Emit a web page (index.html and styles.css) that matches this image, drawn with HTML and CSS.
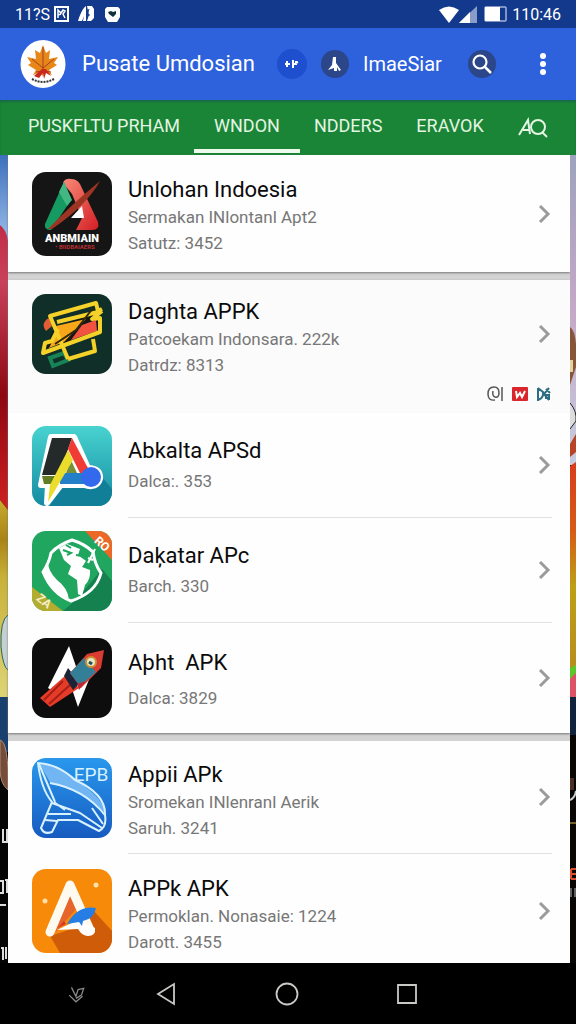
FILE: index.html
```html
<!DOCTYPE html>
<html lang="id">
<head>
    <meta charset="UTF-8">
    <meta name="viewport" content="width=device-width, initial-scale=1">
    <title>Pusate Umdosian</title>
    <link rel="stylesheet" href="styles.css">
</head>
<body>
<div class="status">
    <span>11?S</span>
    <svg class="s-first" width="15" height="16" viewBox="0 0 15 16"><path d="M1 1h13v14H1z" fill="none" stroke="#fff" stroke-width="2"/><path d="M4 12V4l3 3 2-3 2 1-2 3 2 4M4 9l3-1" fill="none" stroke="#fff" stroke-width="1.5"/></svg>
    <svg width="17" height="16" viewBox="0 0 17 16"><path d="M0 15C2 9 4 3 8 0v15H5l1-5-2 5z" fill="#fff"/><path d="M9 0h5l2 3v9l-3 3H9l2-6z" fill="#fff"/><path d="M11 3l-2 6h3" stroke="#12398c" fill="none"/></svg>
    <svg width="17" height="17" viewBox="0 0 17 17"><path d="M3 1h11l2 2v8l-3 5H4l-3-5V3z" fill="#fff"/><path d="M4 6l3-1 2 1 3-1v3l-3 3-4-3z" fill="#12303f"/></svg>
    <div class="status-right">
        <svg width="20" height="17" viewBox="0 0 20 17"><path d="M0 4Q10-3 20 4L10 17z" fill="#fff"/></svg>
        <svg width="18" height="17" viewBox="0 0 18 17"><path d="M0 17L18 0v17z" fill="#8a9cc8"/><path d="M0 17L11 6v11z" fill="#fff"/></svg>
        <svg class="battery" width="23" height="16" viewBox="0 0 23 16"><rect x="1" y="1" width="21" height="14" rx="1" fill="none" stroke="#a5b4da" stroke-width="1.5"/><path d="M1 1h15v14H1z" fill="#fff"/></svg>
        <span>110:46</span>
    </div>
</div>
<header class="header">
    <svg class="logo" width="46" height="48" viewBox="0 0 46 48">
        <ellipse cx="23" cy="24" rx="22.500" ry="24" fill="#fff"/>
        <path d="M23 5l3 8 4-3-1 9 9-2-4 6 3 2-8 5 3 5-8-3-1 5-2-5-8 3 3-5-8-5 3-2-4-6 9 2-1-9 5 3z" fill="#e78719"/>
        <path d="M23 7v24M23 28L12 19M23 28l11-9M23 31l-7 1M23 31l8 1" stroke="#a8401c" fill="none"/>
        <path d="M22 29l-8 7 5 2 4-5 1 6 2-6 5 3-5-7z" fill="#c8281e"/>
        <path d="M12 39q11 6 22 0" fill="none" stroke="#333" stroke-width="2" stroke-dasharray="2 1"/>
    </svg>
    <h1 class="brand">Pusate Umdosian</h1>
    <button class="round blue" aria-label="Tambah"><svg width="14" height="12" viewBox="0 0 14 12"><path d="M2 3v6M0 6h5M8 2v8M8 6l5-2M11 3v4" stroke="#fff" stroke-width="2" fill="none"/></svg></button>
    <button class="round" aria-label="Profil"><svg width="16" height="16" viewBox="0 0 16 16"><path d="M6 1h3v6l5 7-2 1-2-4v4H7v-3l-6 2 4-5z" fill="#fff"/></svg></button>
    <a class="sub-brand" href="#">ImaeSiar</a>
    <button class="round search" aria-label="Cari"><svg width="22" height="22" viewBox="0 0 22 22"><circle cx="9" cy="9" r="6.500" fill="none" stroke="#fff" stroke-width="2.200"/><path d="M14 14l6 6" stroke="#fff" stroke-width="2.500"/></svg></button>
    <button class="more" aria-label="Menu"><svg width="8" height="24" viewBox="0 0 8 24"><g fill="#fff"><circle cx="4" cy="4" r="3"/><circle cx="4" cy="12" r="3"/><circle cx="4" cy="20" r="3"/></g></svg></button>
</header>
<nav class="tabs">
    <a href="#">PUSKFLTU PRHAM</a>
    <a class="active" href="#">WNDON</a>
    <a href="#">NDDERS</a>
    <a href="#">ERAVOK</a>
    <a class="find" href="#" aria-label="Cari aplikasi"><svg width="30" height="22" viewBox="0 0 30 22"><g fill="none" stroke="#e3f5e3" stroke-width="2"><path d="M1 18L10 3l2 14M5 13h7"/><circle cx="20" cy="10" r="7"/><path d="M24 15l5 5"/></g></svg></a>
</nav>
<main class="main">
    <svg class="side left" viewBox="0 0 8 808" preserveAspectRatio="none">
        <defs>
            <linearGradient id="sky" x2="0" y2="1"><stop offset="0" stop-color="#3c70bd"/><stop offset="1" stop-color="#99bce9"/></linearGradient>
            <linearGradient id="red" x2="0" y2="1"><stop offset="0" stop-color="#c22c45"/><stop offset=".2" stop-color="#c9415a"/><stop offset=".6" stop-color="#8d0711"/><stop offset="1" stop-color="#cf2020"/></linearGradient>
            <linearGradient id="gold" x2="0" y2="1"><stop offset="0" stop-color="#c8ab2c"/><stop offset=".2" stop-color="#a98417"/><stop offset=".4" stop-color="#c9b23a"/><stop offset="1" stop-color="#ddd477"/></linearGradient>
        </defs>
        <path d="M0 0h8v808H0z" fill="#050505"/>
        <path d="M0 0h8v130H0z" fill="url(#sky)"/>
        <path d="M0 70q6 4 8 15v270L0 345z" fill="url(#red)"/>
        <path d="M0 0h8v85Q6 74 0 70z" fill="url(#sky)"/>
        <path d="M0 345l8 10v187H0z" fill="url(#gold)"/>
        <path d="M8 460Q0 465 1 492q2 20 7 23" fill="#c5d0d2" stroke="#28685a"/>
        <path d="M0 542h8v55H0z" fill="#18406f"/>
        <path d="M0 585q9 2 8 50Q0 628 0 615z" fill="#754d3d" stroke="#b08a6c"/>
        <path d="M3 674v14M3 687h3M7 674v14M0 726h3v12H0M5 725h2v13M0 750h6M1 793h2v12M6 792v12" fill="none" stroke="#ddd" stroke-width="2"/>
    </svg>
    <div class="cards">
        <section class="card">
            <a class="row row-first" href="#">
                <svg class="icon tall" viewBox="0 0 80 84" preserveAspectRatio="none">
                    <defs><linearGradient id="g1" x2="1" y2="1"><stop offset="0" stop-color="#f98b78"/><stop offset="1" stop-color="#d31e24"/></linearGradient></defs>
                    <path d="M0 0h80v84H0z" fill="#151515"/>
                    <path d="M31 11q2-5 8-4 6 0 9 5l18 38q2 8-6 8H44l6-12-10-24z" fill="url(#g1)"/>
                    <path d="M32 10L13 52q-1 6 6 6l20-30z" fill="#159b61"/><path d="M32 10l8 18-5 6-8-14z" fill="#43b781"/>
                    <path d="M50 34l-11 12h13z" fill="#fff"/><path d="M68 9Q40 32 16 57h4Q55 33 68 9z" fill="#9c3524"/>
                    <text x="40" y="70" text-anchor="middle" fill="#fff" font-family="Roboto" font-size="11" font-weight="900">ANBMIAIN</text>
                    <text x="43" y="77" text-anchor="middle" fill="#bb2f31" font-family="Roboto" font-size="6" font-weight="700">• BIIDBAIAERS</text>
                </svg>
                <div class="info"><div class="text"><h2>Unlohan Indoesia</h2><p>Sermakan INlontanl Apt2</p><p>Satutz: 3452</p></div><svg class="arrow" viewBox="0 0 14 20"><path d="M2 2l8 8-8 8"/></svg></div>
            </a>
        </section>
        <section class="card">
            <a class="row row-badge" href="#">
                <svg class="icon" viewBox="0 0 80 80">
                    <path d="M0 0h80v80H0z" fill="#112f29"/>
                    <path d="M18 64l14-5 4 7-15 6z" fill="none" stroke="#168457" stroke-width="4"/>
                    <path d="M17 24q-9 5-3 13l6-5z" fill="#e35c34"/>
                    <path d="M22 34L14 54l54-16-3-20z" fill="#151815"/><path d="M24 32l30-7-22 23-15 6 6-12z" fill="#f9a71a"/><path d="M64 26l1 11-26 9 11-15z" fill="#f15340"/>
                    <g fill="none" stroke="#f4d229" stroke-width="4" stroke-linejoin="round"><path d="M36 65L18 22l46-13 2 8 4-2M36 65l27-8-2-12M25 28l45-11M70 17l-10 8 8-1 0 14-57 21 2-10 7-2 6-12"/></g>
                    <path d="M61 14L44 36 23 50" fill="none" stroke="#34280b" stroke-width="2"/>
                </svg>
                <div class="info"><div class="text"><h2>Daghta APPK</h2><p>Patcoekam Indonsara. 222k</p><p>Datrdz: 8313</p></div><svg class="arrow" viewBox="0 0 14 20"><path d="M2 2l8 8-8 8"/></svg></div>
            </a>
            <div class="badges">
                <svg width="16" height="16" viewBox="0 0 16 16"><g fill="none" stroke="#555" stroke-width="1.500"><path d="M8 14Q1 15 1 8t6-7q5 0 5 6 0 5-4 4-3-1-2-6M15 1v14"/></g></svg>
                <svg width="16" height="14" viewBox="0 0 16 14"><rect width="16" height="14" rx="1" fill="#d9252b"/><path d="M4 4l1 6 3-4 2 4 3-6" fill="none" stroke="#fff" stroke-width="2"/></svg>
                <svg width="14" height="14" viewBox="0 0 14 14"><g fill="none" stroke="#2d6d84" stroke-width="2"><path d="M1 1v12Q7 11 6 5L1 1M12 1L7 7l5 6M9 2l4 4M9 12V8h3v5"/></g></svg>
            </div>
            <a class="row" href="#">
                <svg class="icon" viewBox="0 0 80 80">
                    <defs><linearGradient id="g3" x2="0" y2="1"><stop offset="0" stop-color="#48d3cf"/><stop offset="1" stop-color="#158ba3"/></linearGradient></defs>
                    <path d="M0 0h80v80H0z" fill="url(#g3)"/><path d="M69 50l11 13v17H18l12-18z" fill="#117f97"/>
                    <path d="M19 11h23l14 31q13 0 12 11-3 10-16 6H29L15 77l1-18H9l2-10z" fill="#fff" stroke="#fff" stroke-width="6" stroke-linejoin="round"/>
                    <path d="M20 12h20L27 49H10z" fill="#242a2a"/><path d="M40 12l18 34-7 7-15-30z" fill="#f13c36"/><path d="M10 50h16v8H12z" fill="#627e22"/><path d="M28 47h24v11H28z" fill="#247fc8"/><path d="M39 34l6 13H34z" fill="#79903b"/><path d="M36 24l5 10L16 76l2-17z" fill="#eadd2c"/><circle cx="59" cy="51" r="10" fill="#3269ed"/>
                </svg>
                <div class="info line"><div class="text short"><h2>Abkalta APSd</h2><p>Dalca:. 353</p></div><svg class="arrow" viewBox="0 0 14 20"><path d="M2 2l8 8-8 8"/></svg></div>
            </a>
            <a class="row" href="#">
                <svg class="icon" viewBox="0 0 80 80">
                    <path d="M0 0h80v80H0z" fill="#21a660"/><path d="M70 38l10 12v30H31l14-12z" fill="#14814f"/><path d="M53 0h27v29z" fill="#ed6827"/><path d="M0 56l31 24H0z" fill="#b4ac2e"/>
                    <path d="M40 9q13 4 21 12 2 13 8 21-5 20-30 28-19-7-28-29 6-9 8-19 7-8 21-13z" fill="none" stroke="#fff" stroke-width="3"/>
                    <path d="M16 29q-1 10 9 20 11 8 12 20Q18 62 11 42z" fill="#fff"/><path d="M27 17l8-4 13 5-2 6 8 6-4 6 8 3q1 9-5 15l-3 11-4-2-1-14-9-6 3-8-7-6z" fill="#fff"/><path d="M31 19l8 3-4 2M34 14l5 3M44 24l6 1" stroke="#21a660" stroke-width="2" fill="none"/><path d="M56 32l7-14M56 27l5 2" stroke="#fff" stroke-width="2"/>
                    <text x="70" y="17" text-anchor="middle" fill="#fff" font-family="Roboto" font-size="12" font-weight="700" transform="rotate(42 70 13)">RO</text><text x="12" y="74" text-anchor="middle" fill="#f3eec4" font-family="Roboto" font-size="12" font-weight="700" transform="rotate(38 12 70)">ZA</text>
                </svg>
                <div class="info line"><div class="text short"><h2>Daķatar APc</h2><p>Barch. 330</p></div><svg class="arrow" viewBox="0 0 14 20"><path d="M2 2l8 8-8 8"/></svg></div>
            </a>
            <a class="row row-end" href="#">
                <svg class="icon" viewBox="0 0 80 80">
                    <path d="M0 0h80v80H0z" fill="#0d0d0d"/><path d="M37 8L16 50l10 6 10-17 10 30 18-45-10 3-6 13z" fill="#fff"/>
                    <path d="M34 37l13 13-29 19-10-9z" fill="#e43c28"/><path d="M31 43L12 62M38 47L17 66" stroke="#a91e16" stroke-width="2"/><path d="M36 30l12 15-7 7-9-14z" fill="#1d2336"/>
                    <path d="M55 16l17-4-3 18-20 20-11-15z" fill="#d93d32"/><path d="M52 20l12 14-16 14-10-13z" fill="#347f98"/><circle cx="59" cy="24" r="5" fill="#e5e8c9" stroke="#cf8f31" stroke-width="2"/><path d="M57 24l3 2" stroke="#254e4d" stroke-width="3"/><path d="M45 46l9-3-7 9z" fill="#bd2837"/>
                </svg>
                <div class="info"><div class="text short loose"><h2>Aþht&nbsp; APK</h2><p>Dalca: 3829</p></div><svg class="arrow" viewBox="0 0 14 20"><path d="M2 2l8 8-8 8"/></svg></div>
            </a>
        </section>
        <section class="card">
            <a class="row row-long" href="#">
                <svg class="icon" viewBox="0 0 80 80">
                    <defs><linearGradient id="g6" x2="0" y2="1"><stop offset="0" stop-color="#2998ed"/><stop offset="1" stop-color="#175bc0"/></linearGradient></defs>
                    <path d="M0 0h80v80H0z" fill="url(#g6)"/><path d="M7 5q25 3 45 23 19 13 21 27-20-22-54-29z" fill="#72b5f3"/>
                    <g fill="none" stroke="#d8f1ff" stroke-width="2" stroke-linejoin="round"><path d="M6 5q20 1 37 17 31 14 30 35 2 12-6 16L46 62H26l-6 12q-8 3-11-4l11-26Q9 31 6 5z"/><path d="M7 6l16 38M18 25q34 6 55 32M20 45l28 10 22 15M16 56h23M13 62l12 1M60 50l11 16M22 44l11 8"/></g>
                    <text x="59" y="23" text-anchor="middle" fill="#d8f1ff" font-family="Roboto" font-size="19">EPB</text>
                </svg>
                <div class="info line"><div class="text"><h2>Appii APk</h2><p>Sromekan INlenranl Aerik</p><p>Saruh. 3241</p></div><svg class="arrow" viewBox="0 0 14 20"><path d="M2 2l8 8-8 8"/></svg></div>
            </a>
            <a class="row row-last" href="#">
                <svg class="icon tall" viewBox="0 0 80 84" preserveAspectRatio="none">
                    <path d="M0 0h80v84H0z" fill="#f88a09"/><path d="M18 67l31-10 12-16 19 21v22H28z" fill="#cf5c08"/><path d="M37 24l8 15-22 25z" fill="#e6652b"/>
                    <path d="M18 63l20-47 20 45" fill="none" stroke="#fffaf0" stroke-width="9" stroke-linecap="round" stroke-linejoin="round"/><path d="M25 61l21-10 17 8q1 8-7 8-6 0-10-7z" fill="#fff"/><path d="M64 39q-18-3-29 16l12-2 3 4 1-5q11-2 13-13z" fill="#267de3"/><path d="M34 55l-8 4 6-7z" fill="#d9362a"/><circle cx="13" cy="32" r="2.500" fill="#ffe0a6"/><circle cx="64" cy="16" r="2.500" fill="#ffe0a6"/>
                </svg>
                <div class="info"><div class="text"><h2>APPk APK</h2><p>Permoklan. Nonasaie: 1224</p><p>Darott. 3455</p></div><svg class="arrow" viewBox="0 0 14 20"><path d="M2 2l8 8-8 8"/></svg></div>
            </a>
        </section>
    </div>
    <svg class="side right" viewBox="0 0 6 808" preserveAspectRatio="none">
        <defs>
            <linearGradient id="pale" x2="0" y2="1"><stop offset="0" stop-color="#9da3bf"/><stop offset=".5" stop-color="#c5a8c7"/><stop offset="1" stop-color="#c5cde0"/></linearGradient>
            <linearGradient id="fire" x2="0" y2="1"><stop offset="0" stop-color="#d93c1c"/><stop offset=".3" stop-color="#d65b16"/><stop offset=".55" stop-color="#bda015"/><stop offset="1" stop-color="#b78720"/></linearGradient>
        </defs>
        <path d="M0 0h6v808H0z" fill="#090706"/><path d="M0 0h6v310H0z" fill="url(#pale)"/>
        <path d="M0 172q8 5 6 40l-6 18z" fill="#875637"/><path d="M0 205h3v12H0z" fill="#e2d2a0"/><path d="M0 248q7 8 6 18l-6 8" fill="#ddd" stroke="#252525"/><path d="M0 289l6-10v18l-6 5z" fill="#b84326"/>
        <path d="M0 311l6-4v228H0z" fill="url(#fire)"/><path d="M0 513l6-3v8l-6 6z" fill="#5ac72a"/><path d="M0 524l6-6v24H0z" fill="#dc5365"/><path d="M0 542h6v38H0z" fill="#12243d"/>
        <path d="M0 623h4v12H0z" fill="#4c3025"/><path d="M0 645q5-2 6-9" stroke="#ccc" stroke-width="2" fill="none"/><path d="M0 668h6" stroke="#765f26" stroke-width="2"/><path d="M1 714h5M1 719h5M1 724h5M1 714v10" stroke="#db4e29" stroke-width="2"/><path d="M1 733v9M5 733v9" stroke="#bbb"/>
    </svg>
</main>
<footer class="navbar">
    <button class="hide" aria-label="Sembunyikan"><svg width="20" height="20" viewBox="0 0 18 18"><path d="M4 3l4 8 2-6 5-1-2 6-5 3M2 10l6 6 6-5" fill="none" stroke="#888" stroke-width="1.200"/></svg></button>
    <button aria-label="Kembali"><svg width="24" height="24" viewBox="0 0 24 24"><path d="M19 2v20L3 12z" fill="none" stroke="#c8c8c4" stroke-width="1.800"/></svg></button>
    <button aria-label="Beranda"><svg width="24" height="24" viewBox="0 0 24 24"><circle cx="12" cy="12" r="10.500" fill="none" stroke="#c8c8c4" stroke-width="1.800"/></svg></button>
    <button aria-label="Terbaru"><svg width="24" height="24" viewBox="0 0 24 24"><path d="M3 3h18v18H3z" fill="none" stroke="#c8c8c4" stroke-width="1.800"/></svg></button>
</footer>
</body>
</html>
```
FILE: styles.css
```css
*{box-sizing:border-box;}
body,h1,h2,p{margin:0;padding:0;}
body{background:#000;font-family:Roboto,"Liberation Sans",sans-serif;}
a{color:inherit;text-decoration:none;}
button{display:flex;align-items:center;justify-content:center;padding:0;border:0;background:none;cursor:pointer;}
svg{display:block;flex:none;}

.status{display:flex;align-items:center;height:28px;padding:0 15px;background:#12398c;color:#fff;font-size:16px;}
.status > svg{margin-left:9px;}
.status > .s-first{margin-left:4px;}
.status-right{display:flex;align-items:center;margin-left:auto;}
.status-right .battery{margin:0 5px 0 7px;}

.header{display:flex;align-items:center;height:72px;padding:0 20px;background:#2e61dc;color:#fff;}
.brand{margin:0 22px 0 16px;font-size:22px;line-height:32px;font-weight:400;white-space:nowrap;}
.round{width:28px;height:28px;margin-right:14px;border-radius:50%;background:#2b4689;}
.round.blue{width:30px;height:30px;background:#1d4fcf;}
.sub-brand{font-size:20px;line-height:32px;}
.round.search{margin:0 0 0 26px;}
.more{width:26px;height:40px;margin-left:auto;}

.tabs{display:flex;height:55px;padding-left:11px;background:#1a8536;color:#e3f5e3;font-size:18px;line-height:52px;box-shadow:inset 0 2px 2px #176b49;}
.tabs a{position:relative;padding:0 17px;white-space:nowrap;}
.tabs .active:after{content:"";position:absolute;left:-3px;right:-3px;bottom:2px;height:4px;background:#effaef;}
.tabs .find{display:flex;align-items:center;}

.main{display:flex;}
.side{height:auto;align-self:stretch;}
.left{width:8px;}
.right{width:6px;}
.cards{flex:1;min-width:0;background:#d3d3d4;}
.card{margin-bottom:8px;background:#fefefe;box-shadow:0 1px 2px #777;}
.card:last-child{margin-bottom:0;box-shadow:none;}
.row{display:flex;align-items:center;gap:16px;height:105px;padding:0 18px 0 24px;}
.row-first{height:117px;}
.row-badge{height:108px;background:#fbfbfb;}
.row-end{height:110px;}
.row-long{height:113px;}
.row-last{height:109px;padding-top:4px;}
.icon{width:80px;height:80px;border-radius:14px;}
.icon.tall{height:84px;}
.info{display:flex;flex:1;align-items:center;align-self:stretch;min-width:0;}
.line{border-bottom:1px solid #e2e2e2;}
.text{flex:1;min-width:0;padding-top:8px;white-space:nowrap;}
.row-first .text{padding-top:4px;}
.text.short{padding-top:0;}
.text.loose{padding-top:4px;}
.text h2{color:#0b0b0b;font-size:22px;line-height:28px;font-weight:400;}
.text p{color:#777;font-size:17px;line-height:26px;}
.short p{margin-top:3px;}
.loose p{margin-top:8px;}
.arrow{width:14px;height:20px;}
.arrow path{fill:none;stroke:#9b9b9b;stroke-width:3;}
.badges{display:flex;align-items:center;justify-content:flex-end;gap:9px;height:25px;padding:0 19px 14px 0;background:#fbfbfb;}

.navbar{display:flex;align-items:center;justify-content:center;gap:96px;height:61px;padding-right:93px;background:#000;}
.navbar button{width:24px;height:24px;}
.navbar .hide{margin-right:-30px;}
```
